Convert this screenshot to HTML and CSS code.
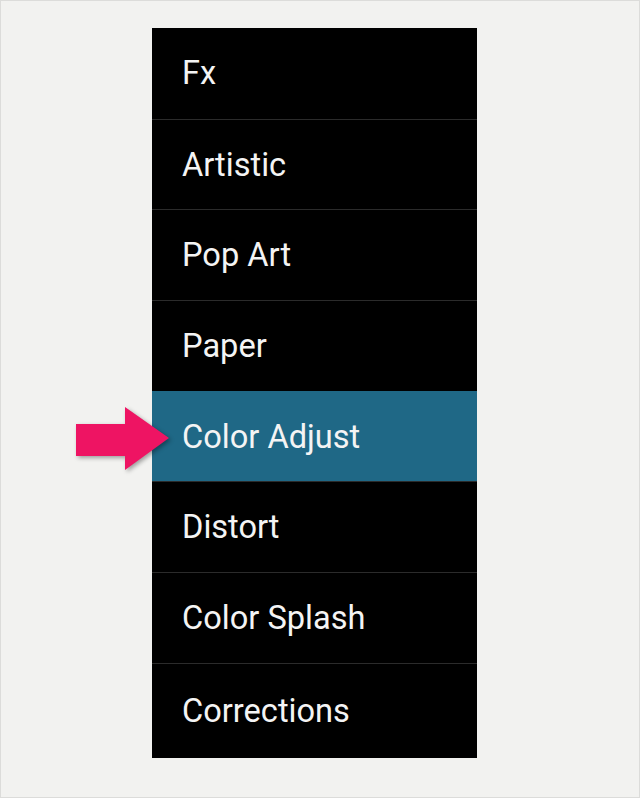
FILE: index.html
```html
<!DOCTYPE html>
<html lang="en">
<head>
<meta charset="UTF-8">
<meta name="viewport" content="width=device-width, initial-scale=1.0">
<title>Effects menu</title>
<link rel="stylesheet" href="styles.css">
</head>
<body>

<div class="frame">
  <ul class="menu">
    <li class="item">Fx</li>
    <li class="item">Artistic</li>
    <li class="item">Pop Art</li>
    <li class="item">Paper</li>
    <li class="item selected">
      <svg class="pointer" width="96" height="66" viewBox="0 0 96 66">
        <polygon points="0,17 49,17 49,0 93,31 49,63 49,49 0,49" fill="#ee1463"/>
      </svg>
      Color Adjust
    </li>
    <li class="item">Distort</li>
    <li class="item">Color Splash</li>
    <li class="item">Corrections</li>
  </ul>
</div>

</body>
</html>
```

FILE: styles.css
```css
body {
  margin: 0;
  font-family: Roboto, "Liberation Sans", sans-serif;
}
.frame {
  box-sizing: border-box;
  width: 640px;
  height: 798px;
  border: 1px solid #dcdcda;
  background: #f2f2f0;
  padding: 27px 0 0 151px;
}
.menu {
  list-style: none;
  margin: 0;
  padding: 0;
  width: 325px;
  height: 730px;
  background: #000;
  display: flex;
  flex-direction: column;
}
.item {
  position: relative;
  flex: none;
  height: 89.7px;
  display: flex;
  align-items: center;
  padding-left: 30px;
  color: #f4f4f4;
  font-size: 32.6px;
  border-top: 1px solid #2b2b2b;
}
.item:first-child {
  height: 90.7px;
  border-top: none;
}
.item:last-child {
  flex: 1;
}
.selected {
  background: #1f6886;
  border-top-color: #1f6886;
}
.pointer {
  position: absolute;
  left: -76px;
  top: 15px;
  filter: drop-shadow(2px 2px 2px rgba(0,0,0,0.35));
}
```
